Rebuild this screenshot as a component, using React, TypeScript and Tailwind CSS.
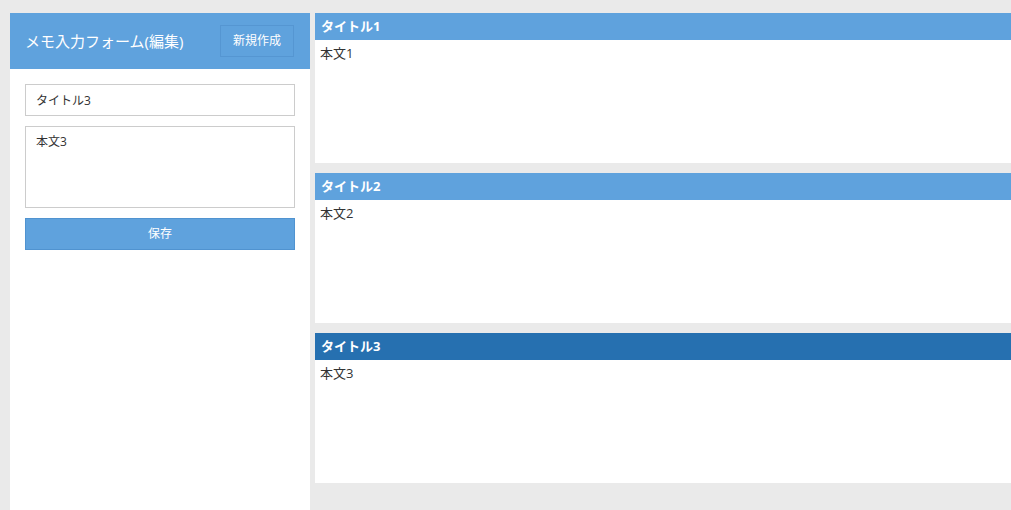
import { useState } from 'react';

interface Memo {
  id: number;
  title: string;
  body: string;
}

const initialMemos: Memo[] = [
  { id: 1, title: 'タイトル1', body: '本文1' },
  { id: 2, title: 'タイトル2', body: '本文2' },
  { id: 3, title: 'タイトル3', body: '本文3' },
];

const font = { fontFamily: '"Open Sans", "Noto Sans CJK JP", sans-serif' };

export default function App() {
  const [memos] = useState<Memo[]>(initialMemos);
  const [selected] = useState(3);
  const current = memos.find((m) => m.id === selected);
  const [title, setTitle] = useState(current?.title ?? '');
  const [body, setBody] = useState(current?.body ?? '');

  return (
    <div className="flex min-h-[510px] gap-[5px] bg-[#eaeaea] pl-[10px] pt-[13px] text-[#333]" style={font}>
      {/* フォーム */}
      <div className="flex w-[300px] shrink-0 flex-col bg-white">
        <div className="flex h-[56px] items-center justify-between bg-[#5fa2dd] pl-[15px] pr-[16px]">
          <h1 className="text-[15px] font-normal text-white">メモ入力フォーム(編集)</h1>
          <button className="h-[32px] w-[74px] border border-[#5596d2] text-[12px] text-white">新規作成</button>
        </div>
        <div className="flex flex-col gap-[10px] px-[15px] pt-[15px]">
          <input
            value={title}
            onChange={(e) => setTitle(e.target.value)}
            className="h-[32px] border border-[#cccccc] px-[10px] text-[12px] text-[#333] outline-none"
          />
          <textarea
            value={body}
            onChange={(e) => setBody(e.target.value)}
            className="h-[82px] resize-none border border-[#cccccc] px-[10px] py-[6px] text-[12px] text-[#333] outline-none"
          />
          <button className="h-[32px] border border-[#5093d0] bg-[#5fa2dd] text-[12px] text-white">保存</button>
        </div>
      </div>

      {/* メモ一覧 */}
      <div className="flex flex-1 flex-col gap-[10px]">
        {memos.map((memo) => (
          <div key={memo.id} className="flex h-[150px] flex-col bg-white">
            <div
              className={`flex h-[27px] items-center px-[6px] text-[13px] font-bold text-white ${
                memo.id === selected ? 'bg-[#2670b0]' : 'bg-[#5fa2dd]'
              }`}
            >
              {memo.title}
            </div>
            <p className="px-[5px] pt-[4px] text-[13px]">{memo.body}</p>
          </div>
        ))}
      </div>
    </div>
  );
}
